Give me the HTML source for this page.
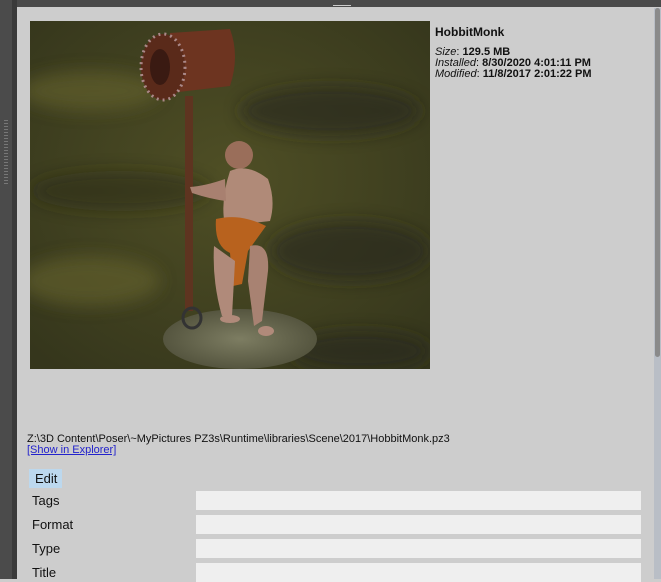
<!DOCTYPE html>
<html><head><style>
body{margin:0;width:661px;height:579px;overflow:hidden;background:#cdcdcd;font-family:"Liberation Sans",sans-serif;position:relative}
.abs{position:absolute}
.row{position:absolute;left:32px;font-size:13px;color:#111}
.fld{position:absolute;left:196px;width:445px;height:19px;background:#efefef}
</style></head><body>
<div class="abs" style="left:0;top:0;width:12px;height:579px;background:#4b4b4b"></div>
<div class="abs" style="left:12px;top:0;width:5px;height:579px;background:#3a3a3a"></div>
<div class="abs" style="left:4px;top:120px;width:4px;height:65px;background:repeating-linear-gradient(#777 0 1px,#4b4b4b 1px 3px)"></div>
<div class="abs" style="left:17px;top:0;width:644px;height:7px;background:#4a4a4a"></div>
<div class="abs" style="left:333px;top:5px;width:18px;height:1px;background:#ccc"></div>
<div class="abs" style="left:654px;top:8px;width:7px;height:571px;background:#b9bec6"></div>
<div class="abs" style="left:655px;top:8px;width:5px;height:349px;background:#8a8a8a;border-radius:3px"></div>

<svg class="abs" style="left:30px;top:21px" width="400" height="348" viewBox="0 0 400 348">
<defs>
<radialGradient id="g" cx="50%" cy="45%" r="70%"><stop offset="0" stop-color="#4f4f25"/><stop offset="1" stop-color="#35361c"/></radialGradient>
<radialGradient id="b" cx="50%" cy="50%" r="50%"><stop offset="0" stop-color="#7d7d62"/><stop offset="1" stop-color="#55553f"/></radialGradient>
<filter id="bl"><feGaussianBlur stdDeviation="8"/></filter>
</defs>
<rect width="400" height="348" fill="url(#g)"/>
<g filter="url(#bl)">
<ellipse cx="300" cy="90" rx="90" ry="25" fill="#25261a" opacity=".6"/>
<ellipse cx="60" cy="70" rx="70" ry="20" fill="#65622f" opacity=".6"/>
<ellipse cx="320" cy="230" rx="80" ry="30" fill="#25261a" opacity=".6"/>
<ellipse cx="60" cy="260" rx="70" ry="25" fill="#65622f" opacity=".6"/>
<ellipse cx="90" cy="170" rx="90" ry="20" fill="#2a2b1a" opacity=".5"/>
<ellipse cx="330" cy="330" rx="70" ry="20" fill="#25261a" opacity=".6"/>
</g>
<ellipse cx="210" cy="318" rx="77" ry="30" fill="url(#b)"/>
<rect x="155" y="75" width="8" height="215" fill="#5e3420"/>
<ellipse cx="162" cy="297" rx="9" ry="10" fill="none" stroke="#333" stroke-width="3"/>
<path d="M140 12 L200 8 Q210 35 200 65 L140 72 Z" fill="#6d3420"/>
<ellipse cx="133" cy="46" rx="22" ry="33" fill="#5a2a1a" stroke="#a88" stroke-width="3" stroke-dasharray="2 4"/>
<ellipse cx="130" cy="46" rx="10" ry="18" fill="#3a1a12"/>
<circle cx="209" cy="134" r="14" fill="#9a6e5a"/>
<path d="M200 150 Q218 142 238 158 Q246 180 240 200 L195 205 Q190 180 200 150Z" fill="#b08a78"/>
<path d="M195 158 Q175 165 160 166 L162 172 Q180 178 196 180Z" fill="#a88070"/>
<path d="M186 198 Q210 192 236 205 L218 230 L212 263 L203 265 L200 232 Q184 225 186 198Z" fill="#b8621e"/>
<path d="M184 225 Q182 260 192 295 L202 295 L205 240Z" fill="#b08a7a"/>
<path d="M220 225 Q240 220 238 250 L232 300 L224 305 L218 260Z" fill="#a88272"/>
<ellipse cx="200" cy="298" rx="10" ry="4" fill="#b08a7a"/>
<ellipse cx="236" cy="310" rx="8" ry="5" fill="#b08a7a"/>
</svg>

<div class="abs" style="left:435px;top:25px;font-size:12px;font-weight:bold;color:#111">HobbitMonk</div>
<div class="abs" style="left:435px;top:47px;font-size:11px;line-height:11px;color:#111">
<i>Size</i>: <b>129.5 MB</b><br><i>Installed</i>: <b>8/30/2020 4:01:11 PM</b><br><i>Modified</i>: <b>11/8/2017 2:01:22 PM</b></div>

<div class="abs" style="left:27px;top:433px;font-size:11px;color:#111">Z:\3D Content\Poser\~MyPictures PZ3s\Runtime\libraries\Scene\2017\HobbitMonk.pz3</div>
<div class="abs" style="left:27px;top:444px;font-size:11px;color:#2222cc;text-decoration:underline">[Show in Explorer]</div>

<div class="abs" style="left:29px;top:469px;width:33px;height:19px;background:#bcd8ee"></div>
<div class="row" style="top:471px;left:35px">Edit</div>
<div class="row" style="top:493px">Tags</div><div class="fld" style="top:491px"></div>
<div class="row" style="top:517px">Format</div><div class="fld" style="top:515px"></div>
<div class="row" style="top:541px">Type</div><div class="fld" style="top:539px"></div>
<div class="row" style="top:565px">Title</div><div class="fld" style="top:563px"></div>
</body></html>
